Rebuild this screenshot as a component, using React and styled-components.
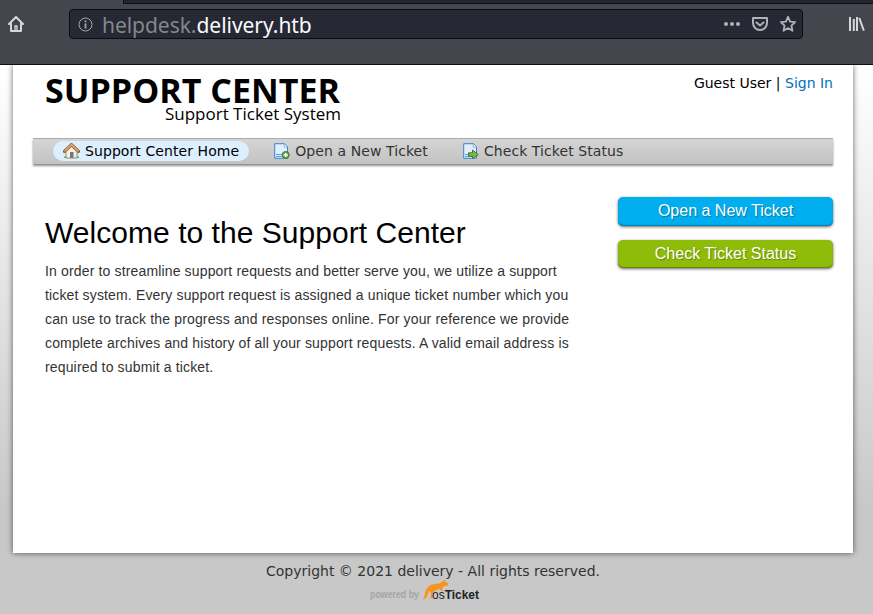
import React from "react";
import styled, { createGlobalStyle } from "styled-components";

const Global = createGlobalStyle`
  * { box-sizing: border-box; }
  html, body { margin: 0; padding: 0; }
  body { width: 873px; height: 614px; overflow: hidden; background: #c8c8c8; }
`;

const Window = styled.div`
  width: 873px;
  height: 614px;
  overflow: hidden;
  display: flex;
  flex-direction: column;
`;
const Browser = styled.header`
  height: 65px;
  flex: none;
  background: #43464d;
  border-bottom: 1px solid #0e0f13;
`;
const TabStrip = styled.div`
  height: 4px;
  margin-left: 123px;
  background: #23252e;
  border-left: 1px solid #0e0f13;
  border-bottom: 1px solid #0e0f13;
`;
const Toolbar = styled.div`
  display: flex;
  align-items: flex-start;
  padding: 5px 7px 0 7px;
`;
const ToolIcon = styled.svg`
  display: block;
  flex: none;
  margin-top: ${(p) => p.$top || 0}px;
`;
const AddressBar = styled.div`
  display: flex;
  flex: none;
  align-items: center;
  width: 734px;
  height: 30px;
  margin: 0 45px 0 44px;
  padding: 0 5px 0 8px;
  background: #262833;
  border: 1px solid #0b0c10;
  border-radius: 4px;
`;
const Url = styled.div`
  flex: 1;
  margin-left: 9px;
  padding-top: 2px;
  font: 21px/28px "Noto Sans", sans-serif;
  letter-spacing: -0.04px;
  color: #85878c;
  white-space: nowrap;
  span { color: #fbfbfe; }
`;
const AddressActions = styled.div`
  display: flex;
  align-items: center;
  gap: 10px;
`;
const Site = styled.div`
  flex: 1;
  padding: 0 20px 0 13px;
  background: linear-gradient(#fff 10px, #c8c8c8 445px);
  font-family: "DejaVu Sans", sans-serif;
  font-size: 14px;
`;
const Page = styled.main`
  height: 488px;
  padding: 0 20px;
  background: #fff;
  box-shadow: 0 0 6px rgba(0, 0, 0, 0.6);
  clip-path: inset(0 -20px -20px -20px);
`;
const Masthead = styled.div`
  display: flex;
  justify-content: space-between;
  height: 73px;
`;
const Logo = styled.svg`
  display: block;
  margin-left: 8px;
`;
const Account = styled.div`
  padding-top: 9px;
  line-height: 18px;
  color: #000;
`;
const Link = styled.a`
  color: #0072bc;
  text-decoration: none;
`;
const Nav = styled.nav`
  display: flex;
  height: 26px;
  padding: 2px 0 0 20px;
  border-top: 1px solid #aaa;
  background: linear-gradient(#d5d5d5, #c2c2c2);
  box-shadow: 0 2px 2px rgba(0, 0, 0, 0.45);
  letter-spacing: 0.08px;
`;
const NavItem = styled.a`
  display: flex;
  align-items: center;
  height: 20px;
  padding: 0 10px;
  gap: 5px;
  margin-right: 15px;
  border-radius: 20px;
  white-space: nowrap;
  color: ${(p) => (p.$active ? "#000" : "#333")};
  background: ${(p) => (p.$active ? "#dbefff" : "transparent")};
`;
const Content = styled.div`
  display: flex;
  justify-content: space-between;
  padding-top: 33px;
  font-family: "Liberation Sans", Arial, sans-serif;
`;
const Welcome = styled.section`
  width: 545px;
  padding: 18px 0 0 12px;
`;
const Title = styled.h1`
  margin: 0;
  font-size: 30px;
  line-height: 36px;
  letter-spacing: 0.04px;
  font-weight: 400;
  color: #000;
`;
const Intro = styled.p`
  margin: 8px 0 0;
  font-size: 14px;
  line-height: 24px;
  letter-spacing: 0.15px;
  color: #333;
  white-space: nowrap;
`;
const Actions = styled.aside`
  display: flex;
  flex-direction: column;
  gap: 14px;
  width: 215px;
`;
const ActionButton = styled.a`
  height: ${(p) => p.$height}px;
  border-radius: 5px;
  background: ${(p) => p.$color};
  color: #fff;
  font-size: 16px;
  line-height: 28px;
  text-align: center;
  text-shadow: 1px 1px 1px rgba(0, 0, 0, 0.3);
  box-shadow: 0 1px 3px rgba(0, 0, 0, 0.6), inset 0 -1px 1px rgba(0, 0, 0, 0.3);
`;
const Footer = styled.footer`
  padding-top: 9px;
  text-align: center;
  line-height: 18px;
  color: #333;
`;
const Powered = styled.svg`
  display: block;
  margin: 0 auto;
`;

function HomeIcon() {
  return (
    <ToolIcon $top={6} width="18" height="18" viewBox="0 0 18 18" fill="none" stroke="#d7d7db" strokeWidth="2" strokeLinejoin="round" strokeLinecap="round">
      <path d="M2 9 9 2l7 7M4 8.5V16h10V8.5" />
      <path d="M8 15v-4h2v4" strokeWidth="1.4" />
    </ToolIcon>
  );
}
function HouseIcon() {
  return (
    <svg width="17" height="16" viewBox="0 0 17 16">
      <path d="M1 13.5h15V15H1z" fill="#69aa51" />
      <path d="M3 8.5 8.5 3 14 8.5V15H3z" fill="#f4eee5" stroke="#8d8c89" />
      <path d="M7 9h3.5v6H7z" fill="#777" />
      <path d="m1.5 8.4 7-6.7 7 6.7" fill="none" stroke="#8b5931" strokeWidth="3.2" strokeLinejoin="round" strokeLinecap="round" />
      <path d="m1.6 8.3 6.9-6.6 6.9 6.6" fill="none" stroke="#e3a56a" strokeWidth="1.8" strokeLinejoin="round" />
    </svg>
  );
}
function PageIcon({ arrow }) {
  return (
    <svg width="16" height="16" viewBox="0 0 16 16">
      <path d="M.7.7h9.8l3 3v11.6H.7z" fill="#d9edff" stroke="#4681c6" />
      <path d="M2 2h8v2.5h2.3V11H2z" fill="#e0f0ff" />
      <path d="M10.3 1v3h3" fill="#fff" stroke="#74a5da" strokeWidth=".8" />
      <path d="M2 11.5h9M2 13.5h9" stroke="#45adf0" />
      {arrow ? (
        <path d="M5.5 9.8h4V7l5.8 4.6-5.8 4v-2.4h-4z" fill="#7eb943" stroke="#45782d" />
      ) : (
        <>
          <circle cx="11.7" cy="12" r="3.5" fill="#6fa547" stroke="#3f762c" />
          <path d="M9.6 12h4.2M11.7 9.9v4.2" stroke="#fff" strokeWidth="1.5" />
        </>
      )}
    </svg>
  );
}

export default function App() {
  return (
    <Window>
      <Global />
      <Browser>
        <TabStrip />
        <Toolbar>
          <HomeIcon />
          <AddressBar>
            <ToolIcon width="15" height="15" viewBox="0 0 15 15" fill="none" stroke="#a5a6aa">
              <circle cx="7.5" cy="7.5" r="6.5" />
              <path d="M7.5 6.5v5M7.5 3.5v1.8" strokeWidth="1.8" />
            </ToolIcon>
            <Url>helpdesk.<span>delivery.htb</span></Url>
            <AddressActions>
              <ToolIcon width="18" height="18" viewBox="0 0 18 18" fill="#b1b1b6">
                <circle cx="3" cy="9" r="2" /><circle cx="9" cy="9" r="2" /><circle cx="15" cy="9" r="2" />
              </ToolIcon>
              <ToolIcon width="18" height="18" viewBox="0 0 18 18" fill="none" stroke="#b1b1b6" strokeWidth="2" strokeLinecap="round" strokeLinejoin="round">
                <path d="M2 3h14v5a7 7 0 0 1-14 0z" /><path d="m5.5 7.5 3.5 3 3.5-3" />
              </ToolIcon>
              <ToolIcon width="18" height="18" viewBox="0 0 18 18" fill="none" stroke="#b1b1b6" strokeWidth="1.8" strokeLinejoin="round">
                <path d="m9 1.8 2.1 4.8 5.1.5-3.8 3.5 1.1 5.2L9 13.1l-4.5 2.7 1.1-5.2-3.8-3.5 5.1-.5z" />
              </ToolIcon>
            </AddressActions>
          </AddressBar>
          <ToolIcon $top={6} width="18" height="18" viewBox="0 0 18 18" fill="none" stroke="#d7d7db" strokeWidth="2">
            <path d="M2 2v14M5.8 4v12M9 2v14M11.3 3l4.5 12.7" />
          </ToolIcon>
        </Toolbar>
      </Browser>
      <Site>
        <Page>
          <Masthead>
            <Logo width="304" height="64" fontFamily="Open Sans, sans-serif" fill="#000">
              <text x="4" y="37.5" fontSize="34" fontWeight="700" textLength="295" lengthAdjust="spacingAndGlyphs">SUPPORT CENTER</text>
              <text x="124" y="54.5" fontSize="17" textLength="176" lengthAdjust="spacingAndGlyphs">Support Ticket System</text>
            </Logo>
            <Account>Guest User | <Link>Sign In</Link></Account>
          </Masthead>
          <Nav>
            <NavItem $active><HouseIcon />Support Center Home</NavItem>
            <NavItem><PageIcon />Open a New Ticket</NavItem>
            <NavItem><PageIcon arrow />Check Ticket Status</NavItem>
          </Nav>
          <Content>
            <Welcome>
              <Title>Welcome to the Support Center</Title>
              <Intro>
                In order to streamline support requests and better serve you, we utilize a support<br />
                ticket system. Every support request is assigned a unique ticket number which you<br />
                can use to track the progress and responses online. For your reference we provide<br />
                complete archives and history of all your support requests. A valid email address is<br />
                required to submit a ticket.
              </Intro>
            </Welcome>
            <Actions>
              <ActionButton $color="#00aeef" $height={29}>Open a New Ticket</ActionButton>
              <ActionButton $color="#8fbc08" $height={28}>Check Ticket Status</ActionButton>
            </Actions>
          </Content>
        </Page>
        <Footer>
          Copyright © 2021 delivery - All rights reserved.
          <Powered width="126" height="24" viewBox="0 0 126 24">
            <text x="0" y="18" fontFamily="Liberation Sans" fontWeight="700" fontSize="10" fill="#a5a5a5" textLength="49" lengthAdjust="spacingAndGlyphs">powered by</text>
            <path d="M52 19.5c3-1 2.5-5 3.500-8 1.500-4.500 5-7.500 9.500-7.500 3.500 0 6-1 8-3l2-1.500.5 2.300 2.800 1.700-.5 2-4 .7-2 2.600 1.500 2-1.600.4-2.200-2.200c-3.500.5-5.500 2-6.500 4.500l-1 3.500 1.500 1.500h-3l.6-5.500-1.600-2.500c-2 3-2 9-7.500 9z" fill="#f7941d" />
            <text x="62" y="19" fontFamily="Liberation Sans" fontSize="13.500" fill="#222" textLength="47" lengthAdjust="spacingAndGlyphs">os<tspan fontWeight="700">Ticket</tspan></text>
          </Powered>
        </Footer>
      </Site>
    </Window>
  );
}
